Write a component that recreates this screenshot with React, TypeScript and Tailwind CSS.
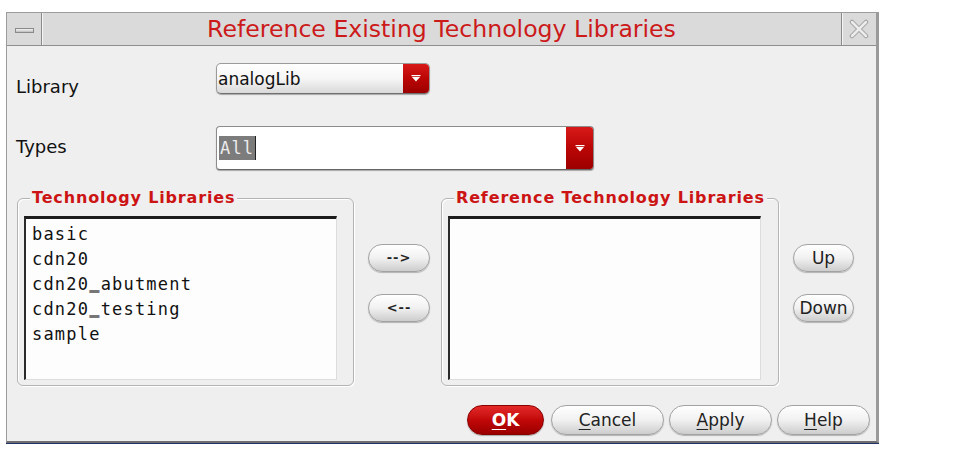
import React from "react";

const sans = "font-['DejaVu_Sans','Liberation_Sans',sans-serif]";
const mono = "font-['DejaVu_Sans_Mono','Liberation_Mono',monospace]";

const TECH_LIBS = ["basic", "cdn20", "cdn20_abutment", "cdn20_testing", "sample"];

function RedArrow({ className }: { className: string }) {
  return (
    <div
      className={`flex items-center justify-center bg-linear-to-b from-[#d81818] via-[#bb0606] to-[#9c0000] ${className}`}
    >
      <svg width="10" height="7" viewBox="0 0 10 7">
        <rect x="0.5" y="0" width="9" height="1.2" fill="#fff" />
        <polygon points="1,2 9,2 5,6.5" fill="#fff" />
      </svg>
    </div>
  );
}

function Pill({
  children,
  className = "",
}: {
  children: React.ReactNode;
  className?: string;
}) {
  return (
    <button
      className={`flex items-center justify-center rounded-full border border-[#a2a2a2] bg-linear-to-b from-[#ffffff] via-[#f1f1f1] to-[#cdcdcd] text-[#222] shadow-[0_1px_1px_rgba(0,0,0,0.25)] ${sans} ${className}`}
    >
      {children}
    </button>
  );
}

function Group({
  title,
  children,
}: {
  title: string;
  children: React.ReactNode;
}) {
  return (
    <div className="relative h-[188px] rounded-[6px] border border-[#b4b4b4] shadow-[inset_1px_1px_0_#ffffff,1px_1px_0_#ffffff] pl-[6px] pt-[17px]">
      <span
        className={`absolute left-[12px] top-[-11px] bg-[#efefef] px-[2px] text-[16px] font-bold leading-[20px] tracking-[0.85px] text-[#cc1414] ${sans}`}
      >
        {title}
      </span>
      {children}
    </div>
  );
}

// underscores come out too thin in the mono face, lift and thicken them
function MonoText({ text }: { text: string }) {
  const parts = text.split("_");
  return (
    <>
      {parts.map((p, i) => (
        <React.Fragment key={i}>
          {i > 0 && (
            <span className="relative top-[-2px] text-black [text-shadow:0_1px_0_#000,0_-1px_0_#000]">
              _
            </span>
          )}
          {p}
        </React.Fragment>
      ))}
    </>
  );
}

function ListBox({ items }: { items: string[] }) {
  return (
    <div className="h-[164px] w-[313px] border-t-[3px] border-l-2 border-r border-b border-t-[#1c1c1c] border-l-[#2a2a2a] border-r-[#dcdcdc] border-b-[#dcdcdc] bg-[#fdfdfd] pl-[6px] pt-[3px]">
      {items.map((it) => (
        <div
          key={it}
          className={`text-[17px] leading-[25px] tracking-[1.2px] text-[#111] ${mono}`}
        >
          <MonoText text={it} />
        </div>
      ))}
    </div>
  );
}

export default function App() {
  return (
    <div className="h-[455px] w-[959px] bg-white pl-[6px] pt-[12px]">
      <div className="flex h-[431px] w-[873px] flex-col border-t border-l border-r-[3px] border-b-2 border-t-[#9c9c9c] border-l-[#9c9c9c] border-r-[#9a9a9a] border-b-[#6e6e6e] bg-[#efefef] shadow-[0_1px_0_#23306a]">
        {/* Title bar */}
        <div className="flex h-[33px] border-b border-[#8e8e8e] bg-[#dadada]">
          <div className="flex w-[35px] items-center justify-center border-r border-[#8a8a8a] shadow-[1px_0_0_#f4f4f4]">
            <div className="mt-[3px] h-[5px] w-[19px] border border-[#8a8a8a] bg-linear-to-b from-[#f6f6f6] to-[#bdbdbd]" />
          </div>
          <div
            className={`flex flex-1 items-center justify-center pt-[2px] text-[23.6px] leading-none text-[#cc1a1a] ${sans}`}
          >
            Reference Existing Technology Libraries
          </div>
          <div className="flex w-[35px] items-center justify-center border-l border-[#8a8a8a] shadow-[inset_1px_0_0_#f4f4f4]">
            <svg width="20" height="20" viewBox="0 0 20 20">
              <path
                d="M3 3 L17 17 M17 3 L3 17"
                stroke="#a0a0a0"
                strokeWidth="4.5"
                strokeLinecap="round"
              />
              <path
                d="M3 3 L17 17 M17 3 L3 17"
                stroke="#ececec"
                strokeWidth="2.5"
                strokeLinecap="round"
              />
            </svg>
          </div>
        </div>

        {/* Body */}
        <div className="flex flex-1 flex-col pl-[9px]">
          {/* Library */}
          <div className="mt-[17px] flex h-[31px] items-start">
            <div className={`mt-[13px] w-[200px] text-[18px] leading-[22px] text-[#111] ${sans}`}>
              Library
            </div>
            <div className="flex h-[31px] w-[214px] overflow-hidden rounded-[5px] border border-[#9a9a9a] border-b-[#6f6f6f] bg-linear-to-b from-[#ffffff] via-[#f6f6f6] to-[#d9d9d9] shadow-[0_1px_1px_rgba(0,0,0,0.3)]">
              <div className={`flex flex-1 items-center pl-[1px] pt-[2px] text-[17px] text-[#111] ${sans}`}>
                analogLib
              </div>
              <RedArrow className="w-[26px]" />
            </div>
          </div>

          {/* Types */}
          <div className="mt-[32px] flex h-[44px] items-start">
            <div className={`mt-[10px] w-[200px] text-[18px] leading-[22px] text-[#111] ${sans}`}>
              Types
            </div>
            <div className="flex h-[44px] w-[378px] overflow-hidden rounded-[4px] border border-[#8c8c8c] border-b-[#666] bg-white shadow-[0_1px_1px_rgba(0,0,0,0.3)]">
              <div className="flex flex-1 items-center pl-[2px]">
                <span
                  className={`bg-[#7c7c7c] px-[1px] text-[17px] leading-[24px] tracking-[1.2px] text-[#ececec] ${mono}`}
                >
                  All
                </span>
                <span className="h-[24px] w-[1px] bg-[#222]" />
              </div>
              <RedArrow className="w-[27px]" />
            </div>
          </div>

          {/* Lists */}
          <div className="ml-[1px] mt-[28px] flex items-start">
            <div className="w-[337px]">
              <Group title="Technology Libraries">
                <ListBox items={TECH_LIBS} />
              </Group>
            </div>
            <div className="ml-[14px] flex w-[62px] flex-col gap-[22px] pt-[46px]">
              <Pill className="h-[28px] text-[13px] font-bold tracking-[1px]">--&gt;</Pill>
              <Pill className="h-[28px] text-[13px] font-bold tracking-[1px]">&lt;--</Pill>
            </div>
            <div className="ml-[11px] w-[338px]">
              <Group title="Reference Technology Libraries">
                <ListBox items={[]} />
              </Group>
            </div>
            <div className="ml-[14px] flex w-[61px] flex-col gap-[22px] pt-[46px]">
              <Pill className="h-[28px] pt-[2px] text-[17px]">Up</Pill>
              <Pill className="h-[28px] pt-[2px] text-[17px]">Down</Pill>
            </div>
          </div>

          {/* Buttons */}
          <div className="mt-[19px] flex justify-end pr-[6px]">
            <button
              className={`flex h-[30px] w-[77px] items-center justify-center rounded-full border border-[#8a0000] bg-linear-to-b from-[#e42828] via-[#c20808] to-[#9a0000] pt-[2px] text-[17px] font-bold text-white shadow-[0_1px_1px_rgba(0,0,0,0.3)] ${sans}`}
            >
              <span className="underline decoration-1 underline-offset-[3px]">O</span>K
            </button>
            <Pill className="ml-[7px] h-[30px] w-[113px] pt-[2px] text-[17px]">
              <span className="underline decoration-1 underline-offset-[3px]">C</span>ancel
            </Pill>
            <Pill className="ml-[5px] h-[30px] w-[103px] pt-[2px] text-[17px]">
              <span className="underline decoration-1 underline-offset-[3px]">A</span>pply
            </Pill>
            <Pill className="ml-[5px] h-[30px] w-[93px] pt-[2px] text-[17px]">
              <span className="underline decoration-1 underline-offset-[3px]">H</span>elp
            </Pill>
          </div>
        </div>
      </div>
    </div>
  );
}
